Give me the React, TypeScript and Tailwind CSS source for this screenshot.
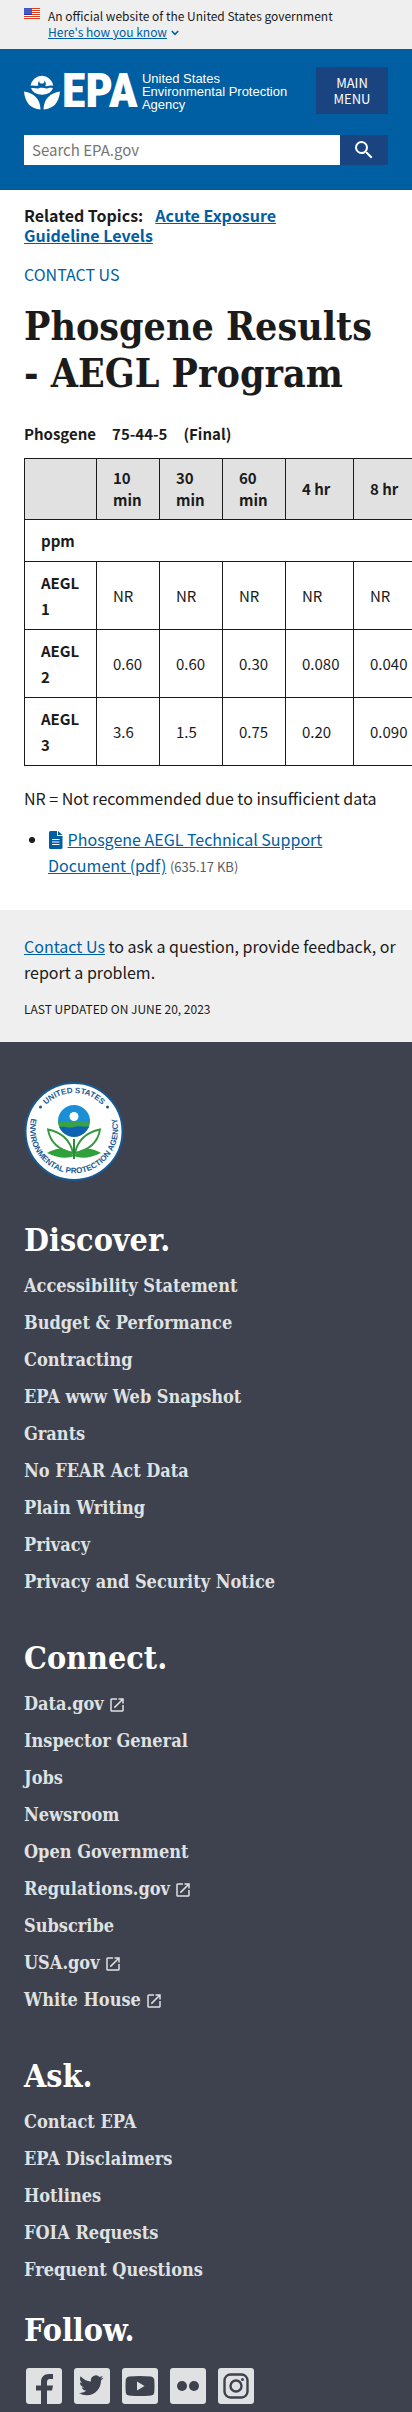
import React from "react";
import { MdOpenInNew, MdSearch } from "react-icons/md";

const discover = [
  "Accessibility Statement",
  "Budget & Performance",
  "Contracting",
  "EPA www Web Snapshot",
  "Grants",
  "No FEAR Act Data",
  "Plain Writing",
  "Privacy",
  "Privacy and Security Notice",
];
const connect = [
  "Data.gov",
  "Inspector General",
  "Jobs",
  "Newsroom",
  "Open Government",
  "Regulations.gov",
  "Subscribe",
  "USA.gov",
  "White House",
];
const ask = ["Contact EPA", "EPA Disclaimers", "Hotlines", "FOIA Requests", "Frequent Questions"];
const external = ["Data.gov", "Regulations.gov", "USA.gov", "White House"];

const rows = [
  { name: "AEGL 1", values: ["NR", "NR", "NR", "NR", "NR"] },
  { name: "AEGL 2", values: ["0.60", "0.60", "0.30", "0.080", "0.040"] },
  { name: "AEGL 3", values: ["3.6", "1.5", "0.75", "0.20", "0.090"] },
];

const serif = "font-['DejaVu_Serif_Condensed','DejaVu_Serif',serif] font-bold";

function Flag() {
  return (
    <svg viewBox="0 0 16 11" className="h-[11px] w-4 shrink-0" aria-hidden="true">
      <rect width="16" height="11" fill="#fff" />
      {[0, 2, 4, 6, 8, 10].map((y) => (
        <rect key={y} y={y} width="16" height="1" fill="#db3e1f" />
      ))}
      <rect width="8" height="7" fill="#1e33b1" />
      {[1, 3, 5].map((y) =>
        [1, 3, 5, 7].map((x) => <circle key={`${x}-${y}`} cx={x} cy={y} r="0.5" fill="#fff" />),
      )}
    </svg>
  );
}

function LogoMark() {
  return (
    <svg viewBox="0 0 36 37" className="h-[37px] w-9 shrink-0" aria-hidden="true">
      <path
        fill="#fff"
        d="M6.500 12.800 A11.500 11.500 0 0 1 29.300 12.800 C26 11.800 24 13.800 21.300 12.900 A4 4 0 1 0 14.300 12.600 C11 13.500 9 11.800 6.500 12.800Z"
      />
      <circle cx="17.800" cy="8" r="2.600" fill="#fff" />
      <path fill="#fff" d="M7 15.200 C10 14.200 12 16 15 15.200 C19 14 21 16.200 24 15.200 C26 14.500 27.500 14.700 29 15.200 A11.600 9.500 0 0 1 7 15.200Z" />
      <path fill="#fff" d="M0 18.500 C10 20 16.300 26 16.500 36.500 C7 36 1 30 0 18.500Z" />
      <path fill="#fff" d="M36 18.500 C26 20 19.700 26 19.500 36.500 C29 36 35 30 36 18.500Z" />
    </svg>
  );
}

function Seal() {
  return (
    <svg viewBox="0 0 100 100" className="h-[100px] w-[100px]" role="img" aria-label="EPA seal">
      <defs>
        <path id="seal-top" d="M11 50 A39 39 0 0 1 89 50" />
        <path id="seal-bottom" d="M21.700 13.500 A44 44 0 1 0 78.300 13.500" />
        <clipPath id="seal-ball">
          <circle cx="50" cy="39" r="16" />
        </clipPath>
      </defs>
      <circle cx="50" cy="49.500" r="48.500" fill="#fff" stroke="#175a93" strokeWidth="2" />
      <g fontFamily="Liberation Sans, sans-serif" fontWeight="700" fontSize="8" fill="#1b5a93" textAnchor="middle">
        <text>
          <textPath href="#seal-top" startOffset="50%">UNITED STATES</textPath>
        </text>
        <text>
          <textPath href="#seal-bottom" startOffset="50%">ENVIRONMENTAL PROTECTION AGENCY</textPath>
        </text>
      </g>
      <circle cx="16.500" cy="25" r="1.500" fill="#1b5a93" />
      <circle cx="83.500" cy="25" r="1.500" fill="#1b5a93" />
      <g clipPath="url(#seal-ball)">
        <rect x="34" y="23" width="32" height="18" fill="#1a8fd6" />
        <rect x="34" y="39" width="32" height="8" fill="#37a24a" />
        <path d="M34 46 C40 43 44 47 50 45 C56 43 60 46 66 44 V56 H34Z" fill="#0f62b0" />
      </g>
      <circle cx="50" cy="34.500" r="4.500" fill="#fff" />
      <g fill="#fff" stroke="#35963f" strokeWidth="1.800">
        <path d="M49 71 C46 57 36 50 24 47.500 C26 60 35 68 49 71Z" />
        <path d="M51 71 C54 57 64 50 76 47.500 C74 60 65 68 51 71Z" />
      </g>
      <path d="M50 74 C42 64 32 66 23 71 C33 76 43 77 50 74Z M50 74 C58 64 68 66 77 71 C67 76 57 77 50 74Z" fill="#2fa03a" />
      <path d="M50 57 V77" stroke="#2c8a3b" strokeWidth="2" />
    </svg>
  );
}

function LinkGroup({ title, items }: { title: string; items: string[] }) {
  return (
    <section className="mb-[38px]">
      <h2 className={`${serif} text-[32px] leading-[40px] text-white`}>{title}</h2>
      <ul className="mt-[7px]">
        {items.map((item) => (
          <li key={item} className="h-[37px]">
            <a href="#" className={`${serif} inline-flex items-center gap-1 text-[18px] leading-[37px] text-[#dfe1e2]`}>
              {item}
              {external.includes(item) && <MdOpenInNew className="mt-0.5 h-[18px] w-[18px]" aria-label="external" />}
            </a>
          </li>
        ))}
      </ul>
    </section>
  );
}

const socials = [
  {
    name: "Facebook",
    art: (
      <path d="M15 36 V22.500 H10 V17.500 H15 V14 C15 9 18 6 23 6 H27 V11 H24 C21.500 11 21 12.500 21 14.500 V17.500 H27 L26 22.500 H21 V36Z" />
    ),
  },
  {
    name: "Twitter",
    art: (
      <path
        transform="translate(5 5) scale(1.02)"
        d="M23.950 4.570a10 10 0 0 1-2.820.770 4.960 4.960 0 0 0 2.160-2.720c-.950.550-2 .950-3.130 1.180a4.920 4.920 0 0 0-8.380 4.480C7.690 8.100 4.070 6.130 1.640 3.160a4.920 4.920 0 0 0 1.520 6.570 4.900 4.900 0 0 1-2.230-.610v.060a4.920 4.920 0 0 0 3.950 4.830 5 5 0 0 1-2.210.080 4.940 4.940 0 0 0 4.600 3.420A9.870 9.870 0 0 1 0 19.540a13.990 13.990 0 0 0 7.550 2.210c9.050 0 14-7.500 14-13.980 0-.210 0-.420-.020-.630a9.940 9.940 0 0 0 2.460-2.550z"
      />
    ),
  },
  {
    name: "YouTube",
    art: (
      <>
        <path d="M7 8.500 Q18 7.500 29 8.500 Q32 9 32.300 12 Q32.800 18 32.300 24 Q32 27 29 27.500 Q18 28.500 7 27.500 Q4 27 3.700 24 Q3.200 18 3.700 12 Q4 9 7 8.500Z" />
        <path d="M15 13.500 L22.500 18 L15 22.500Z" fill="#dfe1e2" />
      </>
    ),
  },
  {
    name: "Flickr",
    art: (
      <>
        <circle cx="12" cy="18" r="5" />
        <circle cx="24" cy="18" r="5" />
      </>
    ),
  },
  {
    name: "Instagram",
    art: (
      <>
        <rect x="6.500" y="6.500" width="23" height="23" rx="6" fill="none" stroke="#3e424e" strokeWidth="2.400" />
        <circle cx="18" cy="18" r="5.500" fill="none" stroke="#3e424e" strokeWidth="2.400" />
        <circle cx="24.500" cy="11.500" r="1.500" />
      </>
    ),
  },
];

export default function App() {
  return (
    <div className="overflow-x-clip bg-white font-['Noto_Sans_CJK_SC','Noto_Sans',sans-serif] text-[16px] leading-[26px] text-[#1b1b1b]">
      <div className="flex h-[49px] gap-2 bg-[#efefef] px-6 pt-2 text-[12px] leading-4">
        <Flag />
        <div>
          <p>An official website of the United States government</p>
          <button className="flex items-center gap-1 text-[#005ea2]">
            <span className="underline">Here's how you know</span>
            <svg viewBox="0 0 8 6" className="mt-0.5 h-[6px] w-2" fill="none" stroke="currentColor" strokeWidth="1.600" aria-hidden="true">
              <path d="M0.800 1 L4 4.300 L7.200 1" />
            </svg>
          </button>
        </div>
      </div>

      <header className="bg-[#005ea2] px-6 pt-[18px] pb-[25px]">
        <div className="flex items-start justify-between">
          <a href="#" className="flex items-center pt-1 text-white">
            <LogoMark />
            <span className="ml-0.5 font-['Roboto_Condensed','Noto_Sans_CJK_SC',sans-serif] text-[48px] leading-[40px] font-black">EPA</span>
            <span className="ml-1 font-['Liberation_Sans',sans-serif] text-[13px] leading-[13px] whitespace-nowrap">
              United States
              <br />
              Environmental Protection
              <br />
              Agency
            </span>
          </a>
          <button className="h-[47px] w-[72px] bg-[#1a4480] text-[13px] leading-4 text-white">
            MAIN
            <br />
            MENU
          </button>
        </div>
        <form className="mt-[21px] flex h-[30px]" onSubmit={(e) => e.preventDefault()}>
          <input
            type="search"
            aria-label="Search EPA.gov"
            placeholder="Search EPA.gov"
            className="min-w-0 flex-1 bg-white px-2 text-[15px] text-[#1b1b1b] outline-none placeholder:text-[#757575]"
          />
          <button aria-label="Search" className="flex w-12 items-center justify-center bg-[#1a4480] text-white">
            <MdSearch className="h-6 w-6" />
          </button>
        </form>
      </header>

      <main className="px-6 pt-[15px]">
        <p className="max-w-[300px] leading-5 font-bold">
          <span className="mr-3">Related Topics:</span>
          <a href="#" className="text-[#005ea2] underline">
            Acute Exposure Guideline Levels
          </a>
        </p>
        <p className="mt-4">
          <a href="#" className="text-[#005ea2]">
            CONTACT US
          </a>
        </p>
        <h1 className={`${serif} mt-4 text-[39px] leading-[47px]`}>Phosgene Results - AEGL Program</h1>
        <h2 className="mt-[27px] flex gap-4 text-[15px] leading-5 font-bold">
          <span>Phosgene</span>
          <span>75-44-5</span>
          <span>(Final)</span>
        </h2>
        <table className="mt-3.5 w-[397px] table-fixed border-collapse text-left text-[15px]">
          <colgroup>
            <col className="w-[72px]" />
            <col className="w-[63px]" />
            <col className="w-[63px]" />
            <col className="w-[63px]" />
            <col className="w-[68px]" />
            <col className="w-[68px]" />
          </colgroup>
          <thead>
            <tr className="h-[61px] bg-[#e1e1e1] leading-[22px]">
              <td className="border border-[#1b1b1b]" />
              {["10 min", "30 min", "60 min", "4 hr", "8 hr"].map((h) => (
                <th key={h} scope="col" className="border border-[#1b1b1b] pl-4 font-bold">
                  {h}
                </th>
              ))}
            </tr>
          </thead>
          <tbody>
            <tr className="h-[42px]">
              <th colSpan={6} scope="colgroup" className="border border-[#1b1b1b] pl-4 font-bold">
                ppm
              </th>
            </tr>
            {rows.map((r) => (
              <tr key={r.name} className="h-[68px]">
                <th scope="row" className="border border-[#1b1b1b] px-4 font-bold">
                  {r.name}
                </th>
                {r.values.map((v, i) => (
                  <td key={i} className="border border-[#1b1b1b] pl-4">
                    {v}
                  </td>
                ))}
              </tr>
            ))}
          </tbody>
        </table>
        <p className="mt-[19px]">NR = Not recommended due to insufficient data</p>
        <ul className="mt-[15px] list-disc pb-8 pl-6">
          <li>
            <svg viewBox="0 0 14 18" className="mr-px ml-px inline h-[18px] w-[14px] align-[-3px]" aria-hidden="true">
              <path d="M0 1.500 Q0 0 1.500 0 H8 V5 H13.500 V16.500 Q13.500 18 12 18 H1.500 Q0 18 0 16.500Z M9 0 L13.500 4 H9Z" fill="#005ea2" />
              <path d="M3 8.500 H10.500 M3 11 H10.500 M3 13.500 H10.500" stroke="#fff" strokeWidth="1" />
            </svg>{" "}
            <a href="#" className="text-[#005ea2] underline">
              Phosgene AEGL Technical Support Document (pdf)
            </a>{" "}
            <span className="text-[13px] leading-none text-[#5c5c5c]">(635.17 KB)</span>
          </li>
        </ul>
      </main>

      <div className="bg-[#efefef] pt-[23px] pr-4 pb-5 pl-6">
        <p>
          <a href="#" className="text-[#005ea2] underline">
            Contact Us
          </a>{" "}
          to ask a question, provide feedback, or report a problem.
        </p>
        <p className="mt-[11px] text-[12px]">LAST UPDATED ON JUNE 20, 2023</p>
      </div>

      <footer className="bg-[#3e424e] px-6 pt-10 pb-2">
        <Seal />
        <div className="mt-[38px]">
          <LinkGroup title="Discover." items={discover} />
          <LinkGroup title="Connect." items={connect} />
          <LinkGroup title="Ask." items={ask} />
        </div>
        <h2 className={`${serif} mt-[-16px] text-[32px] leading-[40px] text-white`}>Follow.</h2>
        <ul className="mt-[18px] ml-0.5 flex gap-3">
          {socials.map((s) => (
            <li key={s.name}>
              <a href="#" aria-label={s.name} className="block">
                <svg viewBox="0 0 36 36" className="h-9 w-9" fill="#3e424e" aria-hidden="true">
                  <rect width="36" height="36" rx="3" fill="#dfe1e2" />
                  {s.art}
                </svg>
              </a>
            </li>
          ))}
        </ul>
      </footer>
    </div>
  );
}
